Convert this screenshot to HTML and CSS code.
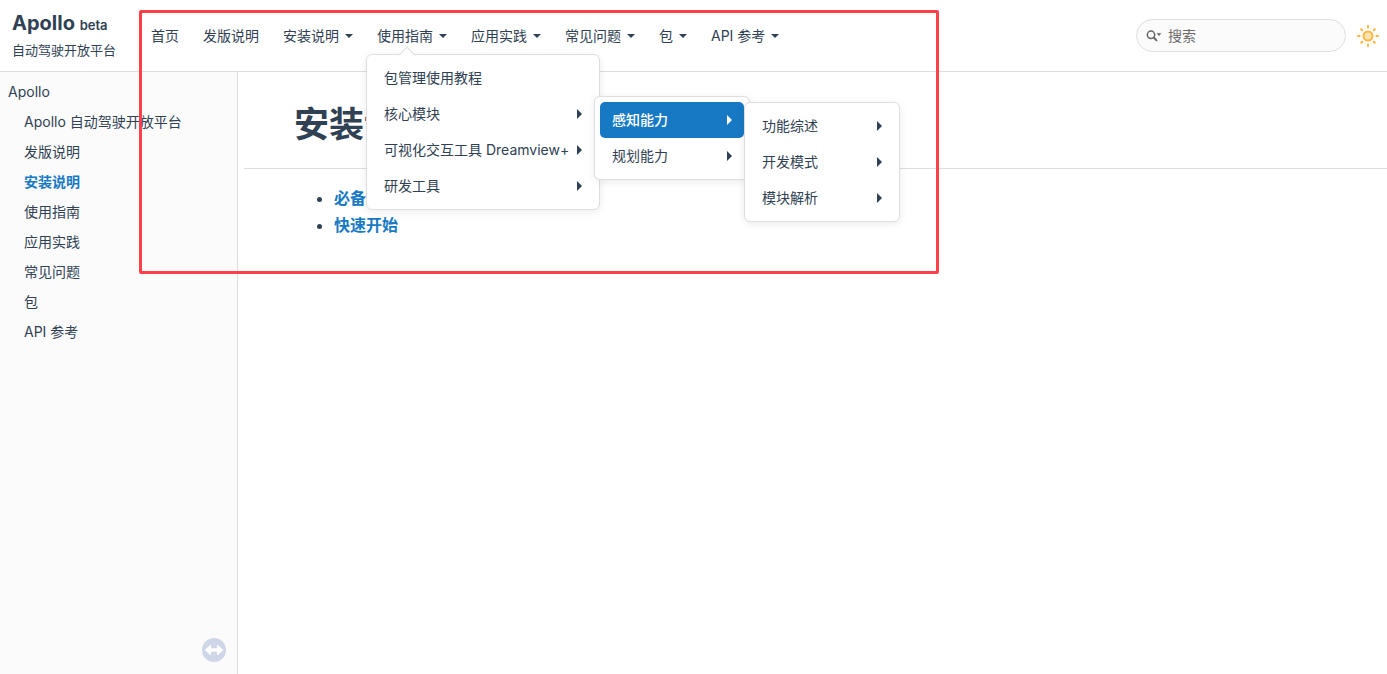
FILE: index.html
```html
<!DOCTYPE html>
<html lang="zh-CN">
<head>
  <meta charset="UTF-8">
  <meta name="viewport" content="width=device-width, initial-scale=1.0">
  <title>Apollo: 安装说明</title>
  <link rel="stylesheet" href="styles.css">
</head>
<body>
  <header class="top">
    <div class="project">
      <div class="project-name">Apollo <span class="project-number">beta</span></div>
      <div class="project-brief">自动驾驶开放平台</div>
    </div>
    <nav class="main-nav">
      <ul class="main-menu">
        <li><a href="#">首页</a></li>
        <li><a href="#">发版说明</a></li>
        <li><a href="#" class="has-sub">安装说明</a></li>
        <li class="open">
          <a href="#" class="has-sub">使用指南</a>
          <ul class="dropdown first">
            <li><a href="#">包管理使用教程</a></li>
            <li>
              <a href="#" class="has-sub">核心模块</a>
              <ul class="dropdown">
                <li>
                  <a href="#" class="has-sub highlighted">感知能力</a>
                  <ul class="dropdown">
                    <li><a href="#" class="has-sub">功能综述</a></li>
                    <li><a href="#" class="has-sub">开发模式</a></li>
                    <li><a href="#" class="has-sub">模块解析</a></li>
                  </ul>
                </li>
                <li><a href="#" class="has-sub">规划能力</a></li>
              </ul>
            </li>
            <li><a href="#" class="has-sub">可视化交互工具 Dreamview+</a></li>
            <li><a href="#" class="has-sub">研发工具</a></li>
          </ul>
        </li>
        <li><a href="#" class="has-sub">应用实践</a></li>
        <li><a href="#" class="has-sub">常见问题</a></li>
        <li><a href="#" class="has-sub">包</a></li>
        <li><a href="#" class="has-sub">API 参考</a></li>
      </ul>
    </nav>
    <form class="search">
      <svg class="search-icon" width="16" height="12" viewBox="0 0 16 12" aria-hidden="true">
        <circle cx="5" cy="4.8" r="3.7" fill="none" stroke="#656565" stroke-width="1.5"/>
        <path d="M7.7 7.5 L11 10.8" stroke="#656565" stroke-width="1.8"/>
        <path d="M10.6 3.2 H15.4 L13 6z" fill="#656565"/>
      </svg>
      <input type="text" placeholder="搜索" aria-label="搜索">
    </form>
    <button class="theme-toggle" type="button" aria-label="切换主题">
      <svg width="22" height="22" viewBox="0 0 22 22" fill="none" stroke="#fbb73c" stroke-width="2" stroke-linecap="round">
        <circle cx="11" cy="11" r="4.5" fill="#fde3b4"/>
        <path d="M11 1v1.6M11 19.4V21M1 11h1.6M19.4 11H21M4.2 4.2l1 1M16.8 16.8l1 1M4.2 17.8l1-1M16.8 5.2l1-1"/>
      </svg>
    </button>
  </header>

  <div class="page">
    <aside class="sidebar">
      <nav>
        <ul class="tree">
          <li><a href="#">Apollo</a>
            <ul>
              <li><a href="#">Apollo 自动驾驶开放平台</a></li>
              <li><a href="#">发版说明</a></li>
              <li><a href="#" class="selected">安装说明</a></li>
              <li><a href="#">使用指南</a></li>
              <li><a href="#">应用实践</a></li>
              <li><a href="#">常见问题</a></li>
              <li><a href="#">包</a></li>
              <li><a href="#">API 参考</a></li>
            </ul>
          </li>
        </ul>
      </nav>
      <button class="sync" type="button" aria-label="同步导航">
        <svg width="24" height="24" viewBox="0 0 24 24">
          <circle cx="12" cy="12" r="12" fill="#ced6e8"/>
          <path d="M2.5 12 L9 6.5 V10.2 H15 V6.5 L21.5 12 L15 17.5 V13.8 H9 V17.5z" fill="#fff"/>
        </svg>
      </button>
    </aside>
    <main class="content">
      <div class="title-bar"><h1>安装说明</h1></div>
      <ul class="contents">
        <li><a href="#">必备</a></li>
        <li><a href="#">快速开始</a></li>
      </ul>
    </main>
  </div>
  <div class="marker"></div>
</body>
</html>
```
FILE: styles.css
```css
:root {
  --primary: #1779c4;
  --text: #2f4153;
  --line: #dedede;
  --side: #fbfbfb;
}
* { margin:0; padding:0; box-sizing:border-box; }
body {
  font-family: Inter, "Noto Sans CJK SC", sans-serif;
  font-size:14px;
  color:var(--text);
  background:#fff;
  min-height:100vh;
  display:flex; flex-direction:column;
}
ul { list-style:none; }
a { color:inherit; text-decoration:none; }
button { border:none; background:none; cursor:pointer; }
svg { display:block; }

/* header */
.top {
  display:flex; align-items:center;
  height:72px;
  padding-right:8px;
  border-bottom:1px solid var(--line);
}
.project { width:151px; padding:0 0 2px 12px; }
.project-name { font-size:20px; font-weight:700; line-height:28px; }
.project-number { font-size:13px; font-weight:600; }
.project-brief { font-size:13px; line-height:22px; }
.main-nav { flex:1; }
.main-menu { display:flex; gap:24px; }
.main-menu li { position:relative; white-space:nowrap; }
.main-menu > li > a { display:flex; align-items:center; gap:6px; line-height:36px; }
.main-menu > li > .has-sub::after {
  content:'';
  border:4px solid transparent;
  border-top-color:var(--text);
  border-bottom:0;
}

/* dropdowns */
.dropdown {
  position:absolute; top:0; left:100%; z-index:5;
  min-width:156px;
  padding:5px;
  background:#fff;
  border:1px solid var(--line);
  border-radius:6px;
  box-shadow:0 2px 8px rgba(0,0,0,0.08);
}
.dropdown.first { top:36px; left:-11px; min-width:234px; }
.dropdown.first::before {
  content:'';
  position:absolute; top:-6px; left:34px;
  width:11px; height:11px;
  background:#fff;
  border:1px solid var(--line);
  border-right:0; border-bottom:0;
  transform:rotate(45deg);
}
.dropdown a {
  display:flex; align-items:center; justify-content:space-between;
  padding:0 12px;
  line-height:36px;
  border-radius:5px;
}
.dropdown .has-sub::after {
  content:'';
  border:5px solid transparent;
  border-left-color:currentColor;
  border-right:0;
}
.dropdown .highlighted { background:var(--primary); color:#fff; font-weight:500; }

.search {
  display:flex; align-items:center; gap:6px;
  width:210px; height:33px;
  padding:0 9px;
  background:var(--side);
  border:1px solid var(--line);
  border-radius:17px;
}
.search-icon { flex-shrink:0; }
.search input {
  flex:1; min-width:0;
  border:none; outline:none; background:none;
  font:inherit;
}
.search input::placeholder { color:#6b6b6b; opacity:1; }
.theme-toggle { margin-left:11px; }

/* page */
.page { flex:1; display:flex; }
.sidebar {
  display:flex; flex-direction:column;
  width:238px;
  padding:5px 11px 12px 8px;
  background:var(--side);
  border-right:1px solid var(--line);
}
.tree a { display:block; line-height:30px; }
.tree ul { padding-left:16px; }
.tree .selected { color:var(--primary); font-weight:700; }
.sync { margin-top:auto; align-self:flex-end; }
.content { flex:1; padding-left:6px; }
.title-bar {
  padding:28px 50px 20px;
  border-bottom:1px solid var(--line);
}
.title-bar h1 { font-size:35px; line-height:48px; }
.contents {
  list-style:disc;
  padding:16px 50px 16px 90px;
  font-size:16px;
  line-height:27px;
}
.contents a { color:var(--primary); font-weight:600; }

/* red frame round the menus */
.marker {
  position:absolute; top:10px; left:139px; z-index:10;
  width:800px; height:264px;
  border:3px solid #ff404b;
  border-radius:2px;
  pointer-events:none;
}
```
